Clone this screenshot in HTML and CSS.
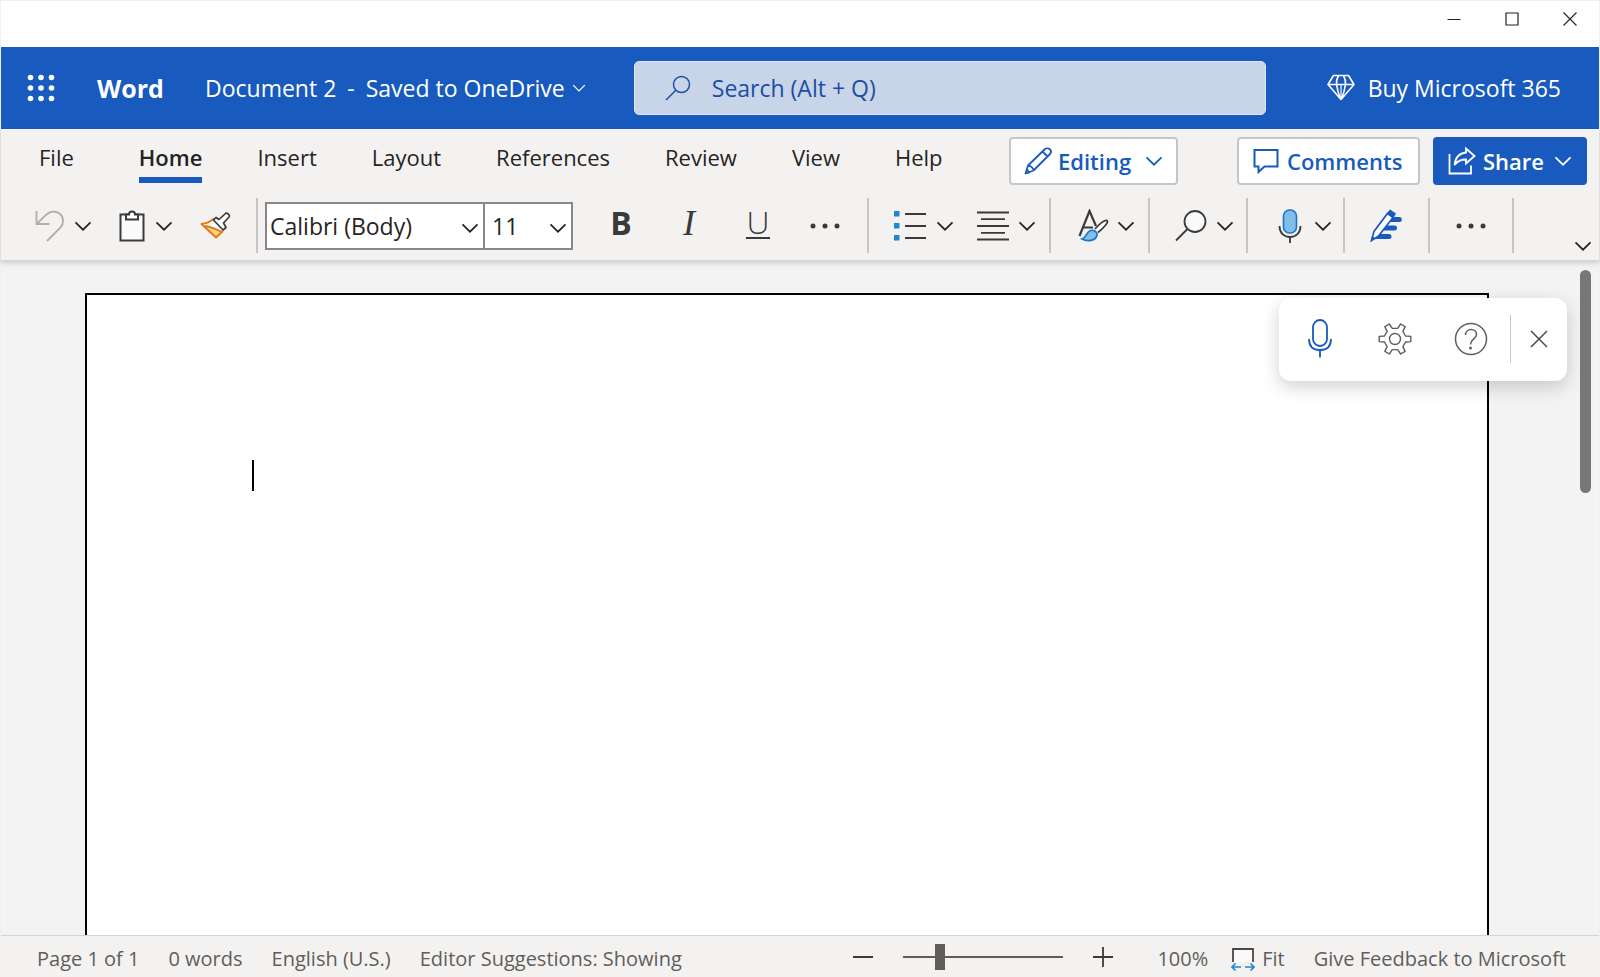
FILE: index.html
```html
<!DOCTYPE html>
<html lang="en">
<head>
<meta charset="utf-8">
<title>Document 2 - Word</title>
<link rel="stylesheet" href="styles.css">
</head>
<body>
<svg class="defs" aria-hidden="true">
  <symbol id="chevron" viewBox="0 0 18 12"><path d="M1.500 2.300 9 9.700 16.500 2.300" fill="none" stroke="currentColor" stroke-width="1.700"/></symbol>
  <symbol id="dots" viewBox="0 0 30 6"><g fill="currentColor"><circle cx="3" cy="3" r="2.500"/><circle cx="15" cy="3" r="2.500"/><circle cx="27" cy="3" r="2.500"/></g></symbol>
</svg>
<div class="window">
  <div class="titlebar">
    <button class="plain" aria-label="Minimize"><svg width="14" height="14" viewBox="0 0 14 14"><path d="M.5 7.500H13.500" stroke="#222" fill="none"/></svg></button>
    <button class="plain" aria-label="Maximize"><svg width="14" height="14" viewBox="0 0 14 14"><path d="M1 1H13V13H1Z" stroke="#222" stroke-width="1.200" fill="none"/></svg></button>
    <button class="plain" aria-label="Close"><svg width="14" height="14" viewBox="0 0 14 14"><path d="M.5.5 13.500 13.500M13.500.5.5 13.500" stroke="#222" stroke-width="1.100" fill="none"/></svg></button>
  </div>

  <header class="header">
    <button class="plain launcher" aria-label="App launcher"><svg width="28" height="28" viewBox="0 0 28 28" fill="#fff"><circle cx="3.500" cy="3.500" r="2.800"/><circle cx="14" cy="3.500" r="2.800"/><circle cx="24.500" cy="3.500" r="2.800"/><circle cx="3.500" cy="14" r="2.800"/><circle cx="14" cy="14" r="2.800"/><circle cx="24.500" cy="14" r="2.800"/><circle cx="3.500" cy="24.500" r="2.800"/><circle cx="14" cy="24.500" r="2.800"/><circle cx="24.500" cy="24.500" r="2.800"/></svg></button>
    <span class="app-name">Word</span>
    <button class="plain doc-name"><span>Document 2</span><span>-</span><span>Saved to OneDrive</span><svg width="14" height="10"><use href="#chevron"/></svg></button>
    <label class="search">
      <svg width="26" height="26" viewBox="0 0 26 26" fill="none" stroke="#1a4fa3" stroke-width="1.500"><circle cx="16.500" cy="9.500" r="8"/><path d="M10.800 15.200 1 25"/></svg>
      <input type="search" placeholder="Search (Alt + Q)" aria-label="Search">
    </label>
    <button class="plain buy"><svg width="28" height="28" viewBox="0 0 28 28" fill="none" stroke="#fff" stroke-width="1.600" stroke-linejoin="round"><path d="M6.500 1.500H21.500L27 10.500 14 25.500 1 10.500ZM1 10.500H27M11.500 1.500Q9 6 9.500 10.500 10.500 18 14 25.500 17.500 18 18.500 10.500 19 6 16.500 1.500"/><path d="M14 10.500V25" stroke-width="1.200"/></svg><span>Buy Microsoft 365</span></button>
  </header>

  <div class="ribbon">
    <div class="tab-row">
      <nav class="tabs">
        <button class="plain tab file">File</button>
        <button class="plain tab active">Home</button>
        <button class="plain tab">Insert</button>
        <button class="plain tab">Layout</button>
        <button class="plain tab">References</button>
        <button class="plain tab">Review</button>
        <button class="plain tab">View</button>
        <button class="plain tab">Help</button>
      </nav>
      <button class="action editing"><svg width="28" height="28" viewBox="0 0 28 28" fill="none" stroke="#185abd" stroke-width="1.800" stroke-linejoin="round"><path d="M1.500 26.500 4 18.500 20.500 2.500C22 1 24.500 1 26 2.500S27 6 25.500 7.500L9.500 23.500ZM4 18.500C6.500 18.500 9.500 21 9.500 23.500M18.500 4.500 23.500 9.500M1.500 26.500 3 22.500 5.500 25.500Z"/></svg><span>Editing</span><svg width="18" height="12"><use href="#chevron"/></svg></button>
      <button class="action comments"><svg width="26" height="26" viewBox="0 0 26 26" fill="none" stroke="#185abd" stroke-width="2"><path d="M1.500 2H24.500V18.500H11.500L5.500 24V18.500H1.500Z"/></svg><span>Comments</span></button>
      <button class="action share"><svg width="28" height="28" viewBox="0 0 28 28" fill="none" stroke="#fff" stroke-width="1.800"><path d="M1.500 7V26.500H23V18.500"/><path d="M18 1.500 26.500 9 18 16.500V12.500C12 12.500 9 14.500 6.500 18 7.500 10.500 11.500 6 18 5.500Z"/></svg><span>Share</span><svg width="18" height="12"><use href="#chevron"/></svg></button>
    </div>

    <div class="toolbar">
      <div class="group first">
        <button class="plain" aria-label="Undo"><svg width="29" height="32" viewBox="0 0 29 32" fill="none" stroke="#b0aeac" stroke-width="1.800"><path d="M1.500 1V14H14.500M1.500 14 11 4.800C15 1 20.500.5 24.500 3.500 29 7 29 13.500 25.500 17.500L12 31"/></svg></button>
        <button class="plain more" aria-label="Undo options"><svg width="18" height="12"><use href="#chevron"/></svg></button>
        <button class="plain paste" aria-label="Paste"><svg width="26" height="32" viewBox="0 0 26 32" fill="#fff" stroke="#3b3a39" stroke-width="2"><path d="M1.500 4.500H24.500V30.500H1.500Z" fill="#fafafa"/><path d="M7 4.500H10C10 2.500 11.300 1.500 13 1.500S16 2.500 16 4.500H19V9.500H7Z"/></svg></button>
        <button class="plain more" aria-label="Paste options"><svg width="18" height="12"><use href="#chevron"/></svg></button>
        <button class="plain painter" aria-label="Format painter"><svg width="31" height="28" viewBox="0 0 31 28" stroke-linejoin="round"><path d="M1.500 12 14 6.500 24 18 16 25.500Z" fill="#fff"/><path d="M5 14 22.500 20 16 25.500Z" fill="#fbd38b"/><path d="M14 6.500C10 10 6.500 11.500 1.500 12L16 25.500 23 19M5 14C11 15 16 17 22 20" fill="none" stroke="#e8740c" stroke-width="1.800"/><path d="M13.500 8 16 5.500 19 7.500 25.500 1.500C27 .5 30.500 3 29 5L23.500 11 26 15.500 23 18Z" fill="#fff" stroke="#3b3a39" stroke-width="1.700"/></svg></button>
      </div>
      <div class="group fonts">
        <span class="combo family"><select aria-label="Font"><option>Calibri (Body)</option></select><svg width="18" height="12"><use href="#chevron"/></svg></span>
        <span class="combo size"><select aria-label="Font size"><option>11</option></select><svg width="18" height="12"><use href="#chevron"/></svg></span>
        <button class="plain letter bold" aria-label="Bold">B</button>
        <button class="plain letter italic" aria-label="Italic">I</button>
        <button class="plain letter under" aria-label="Underline"><span>U</span></button>
        <button class="plain overflow" aria-label="More font options"><svg width="30" height="6"><use href="#dots"/></svg></button>
      </div>
      <div class="group para">
        <button class="plain" aria-label="Bullets"><svg width="32" height="30" viewBox="0 0 32 30"><path d="M0 0H5.500V5.500H0ZM0 12H5.500V17.500H0ZM0 24H5.500V29.500H0Z" fill="#1e88d2"/><path d="M11 3H32M11 15H32M11 27H32" stroke="#3b3a39" stroke-width="1.800"/></svg></button>
        <button class="plain more" aria-label="Bullet options"><svg width="18" height="12"><use href="#chevron"/></svg></button>
        <button class="plain align" aria-label="Alignment"><svg width="32" height="30" viewBox="0 0 32 30" stroke="#3b3a39" stroke-width="1.800"><path d="M0 1.500H32M4 8.200H28M0 15H32M4 21.800H28M0 28.500H32"/></svg></button>
        <button class="plain more near" aria-label="Alignment options"><svg width="18" height="12"><use href="#chevron"/></svg></button>
      </div>
      <div class="group wide">
        <button class="plain low" aria-label="Styles"><svg width="32" height="33" viewBox="0 0 32 33" fill="none"><path d="M1.500 27 11.500 2 18 17M5.500 18.500H15" stroke="#3b3a39" stroke-width="2.200"/><path d="M17 20C22 14.500 26 11 29 11.500 31 12.500 27 18 20 23.500" stroke="#3b3a39" stroke-width="1.700" fill="#fff"/><path d="M4 30C8 29 8 23.500 12.500 21.500 16 20.500 19.500 23 19 26 18 32 9 33 4 30Z" fill="#83bdea" stroke="#1876c9" stroke-width="1.700"/></svg></button>
        <button class="plain more tight" aria-label="Style options"><svg width="18" height="12"><use href="#chevron"/></svg></button>
      </div>
      <div class="group find">
        <button class="plain" aria-label="Find"><svg width="32" height="32" viewBox="0 0 32 32" stroke="#3b3a39" stroke-width="1.800"><circle cx="20" cy="11.500" r="10.500" fill="#fafafa"/><path d="M12.500 19 1 30.500"/></svg></button>
        <button class="plain more near" aria-label="Find options"><svg width="18" height="12"><use href="#chevron"/></svg></button>
      </div>
      <div class="group dictate">
        <button class="plain" aria-label="Dictate"><svg width="24" height="34" viewBox="0 0 24 34" fill="none"><rect x="5.500" y="1" width="13" height="23" rx="6" fill="#83bdea" stroke="#1876c9" stroke-width="1.600"/><path d="M1.500 17C1.500 24 6 28 12 28S22.500 24 22.500 17M12 28V34" stroke="#3b3a39" stroke-width="1.800"/></svg></button>
        <button class="plain more loose" aria-label="Dictate options"><svg width="18" height="12"><use href="#chevron"/></svg></button>
      </div>
      <div class="group editor">
        <button class="plain" aria-label="Editor"><svg width="33" height="33" viewBox="0 0 33 33"><path d="M18 10.500H29.300M13 19H24.500M7 27.500H19" stroke="#185abd" stroke-width="5" stroke-linecap="round"/><path d="M1.500 31.500 4 22.500 17.500 4.500 23 8.500 8.500 27Z" fill="#fff" stroke="#185abd" stroke-width="1.700"/><path d="M17 4 20 .5 26 4.500 23.500 9ZM.8 32.500 2 27 5.500 29.500Z" fill="#185abd"/></svg></button>
      </div>
      <div class="group extra">
        <button class="plain" aria-label="More commands"><svg width="30" height="6"><use href="#dots"/></svg></button>
      </div>
      <button class="plain collapse" aria-label="Ribbon display options"><svg width="18" height="12"><use href="#chevron"/></svg></button>
    </div>
  </div>

  <main class="canvas">
    <article class="page"><div class="caret"></div></article>
    <div class="scrollbar"><div class="thumb"></div></div>
    <div class="dictation">
      <button class="plain" aria-label="Start dictation"><svg width="24" height="39" viewBox="0 0 24 39" fill="none" stroke="#185abd" stroke-width="1.800"><rect x="5" y="1" width="14" height="26" rx="7"/><path d="M1 20C1 27 5 31 12 31S23 27 23 20M12 31V38.500"/></svg></button>
      <button class="plain settings" aria-label="Settings"><svg width="34" height="34" viewBox="-17 -17 34 34" fill="none" stroke="#605e5c" stroke-width="1.400" stroke-linejoin="round"><path d="M10.500-3 15.800-2.600V2.600L10.500 3 7.900 7.600 10.150 12.400 5.650 15 2.700 10.600H-2.700L-5.650 15-10.150 12.400-7.900 7.600-10.500 3-15.800 2.600V-2.600L-10.500-3-7.900-7.600-10.150-12.400-5.650-15-2.700-10.600H2.700L5.650-15 10.150-12.400 7.900-7.600Z"/><circle r="5.500"/></svg></button>
      <button class="plain help" aria-label="Help"><svg width="34" height="34" viewBox="0 0 34 34" fill="none" stroke="#605e5c" stroke-width="1.500"><circle cx="17" cy="17" r="15.500"/><path d="M11.500 13C11.500 9.500 14 7.500 17 7.500S22.500 9.500 22.500 12.500C22.500 17 16.500 17 16.500 22.500"/><circle cx="16.500" cy="26" r="1.500" fill="#605e5c" stroke="none"/></svg></button>
      <span class="rule"></span>
      <button class="plain" aria-label="Close dictation"><svg width="18" height="18" viewBox="0 0 18 18"><path d="M1 1 17 17M17 1 1 17" stroke="#4a4846" stroke-width="1.500" fill="none"/></svg></button>
    </div>
  </main>

  <footer class="status">
    <span>Page 1 of 1</span>
    <span>0 words</span>
    <span>English (U.S.)</span>
    <span>Editor Suggestions: Showing</span>
    <div class="zoom">
      <button class="plain" aria-label="Zoom out"><svg width="20" height="20" viewBox="0 0 20 20"><path d="M0 10H20" stroke="#3b3a39" stroke-width="2"/></svg></button>
      <input type="range" min="0" max="100" value="21" aria-label="Zoom">
      <button class="plain" aria-label="Zoom in"><svg width="20" height="20" viewBox="0 0 20 20"><path d="M0 10H20M10 0V20" stroke="#3b3a39" stroke-width="1.800"/></svg></button>
    </div>
    <span class="percent">100%</span>
    <button class="plain fit"><svg width="24" height="24" viewBox="0 0 24 24" fill="none"><path d="M2 15V2H22V15" fill="#fafafa" stroke="#4a4846" stroke-width="1.800"/><path d="M10 20H1M4.500 16.500 1 20 4.500 23.500M14 20H23M19.500 16.500 23 20 19.500 23.500" stroke="#1e88d2" stroke-width="1.600"/></svg><span>Fit</span></button>
    <button class="plain">Give Feedback to Microsoft</button>
  </footer>
</div>
</body>
</html>
```
FILE: styles.css
```css
* { box-sizing: border-box; }
body {
  margin: 0;
  background: #f0f0f0;
  color: #252423;
  font-family: "Segoe UI", "Open Sans", "Noto Sans", sans-serif;
  font-size: 22px;
  line-height: 32px;
}
svg { display: block; flex: none; }
.defs { position: absolute; width: 0; height: 0; }
button, input, select { font: inherit; color: inherit; }
.plain {
  display: flex;
  align-items: center;
  padding: 0;
  border: 0;
  background: none;
  white-space: nowrap;
}
.window {
  display: flex;
  flex-direction: column;
  height: 100vh;
  padding: 1px 1px 0;
}
.titlebar {
  display: flex;
  justify-content: flex-end;
  gap: 44px;
  height: 46px;
  padding: 11px 22px 0 0;
  background: #fff;
}
.titlebar .plain { height: 14px; }

/* Blue header */
.header {
  display: flex;
  align-items: center;
  height: 82px;
  padding: 0 38px 0 26px;
  background: #185abd;
  color: #fff;
  font-size: 23px;
}
.app-name { margin-left: 42px; width: 69px; font-weight: 700; font-size: 25px; }
.doc-name { margin-left: 39px; gap: 11px; }
.doc-name svg { margin-left: -4px; }
.search {
  display: flex;
  align-items: center;
  gap: 21px;
  width: 632px;
  height: 54px;
  margin: 0 auto 0 48px;
  padding: 0 30px;
  border: 1px solid #dbe5f3;
  border-radius: 5px;
  background: #c8d4e8;
  color: #1a4fa3;
}
.search input { flex: 1; min-width: 0; padding: 0; border: 0; outline: 0; background: none; }
.search input::placeholder { color: #1a4fa3; opacity: 1; }
.buy { gap: 13px; }

/* Ribbon */
.ribbon {
  position: relative;
  z-index: 1;
  border-bottom: 1px solid #d6d4d2;
  background: #f3f2f1;
  box-shadow: 0 2px 5px rgba(0, 0, 0, .16);
}
.tab-row { display: flex; align-items: flex-start; height: 64px; padding: 8px 12px 0 38px; }
.tabs { display: flex; gap: 55px; margin-right: auto; padding-top: 4px; }
.tab { height: 42px; align-items: flex-start; }
.file { margin-right: 10px; }
.active { border-bottom: 6px solid #185abd; font-weight: 600; }
.action {
  display: flex;
  align-items: center;
  height: 48px;
  padding: 0 13px;
  border: 2px solid #c8c6c4;
  border-radius: 4px;
  background: #fff;
  color: #185abd;
  font-weight: 600;
  white-space: nowrap;
}
.editing { width: 169px; margin-right: 59px; }
.editing span { margin: 0 auto 0 6px; }
.comments { width: 183px; margin-right: 13px; padding: 0 14px; gap: 8px; }
.share { width: 154px; border-color: #185abd; background: #185abd; color: #fff; }
.share span { margin: 0 auto 0 7px; }

.toolbar { display: flex; align-items: center; height: 67px; padding: 0 7px 2px 34px; }
.group { display: flex; align-items: center; height: 55px; border-right: 2px solid #c8c6c4; }
.more { margin-left: 10px; }
.near { margin-left: 9px; }
.tight { margin-left: 7px; }
.loose { margin-left: 12px; }
.paste { margin-left: 27px; }
.painter { margin-left: 27px; }
.first { padding-right: 25px; }
.fonts { padding: 0 27px 0 7px; }
.combo { position: relative; height: 48px; border: 2px solid #8a8886; background: #fff; font-size: 23px; }
.combo select {
  width: 100%;
  height: 100%;
  padding: 0 30px 0 3px;
  border: 0;
  appearance: none;
  background: none;
}
.combo svg { position: absolute; right: 4px; top: 18px; pointer-events: none; }
.family { width: 220px; }
.size { width: 90px; margin-left: -2px; }
.size select { padding-left: 7px; }
.letter { justify-content: center; width: 36px; height: 40px; padding-bottom: 5px; color: #3b3a39; font-size: 32px; }
.bold { margin-left: 30px; font-weight: 700; }
.italic { margin-left: 32px; font-family: "Liberation Serif", serif; font-size: 36px; font-style: italic; }
.under { margin-left: 33px; font-weight: 300; }
.under span { border-bottom: 2px solid #3b3a39; line-height: 30px; }
.overflow { margin-left: 34px; color: #3b3a39; }
.para { padding: 0 13px 0 25px; }
.align { margin-left: 23px; }
.wide { padding: 0 13px 0 27px; }
.find { padding: 0 12px 0 25px; }
.dictate { padding: 0 11px 0 30px; }
.editor { padding: 0 25px; }
.extra { padding: 0 26px; color: #3b3a39; }
.collapse { align-self: flex-end; margin: 0 0 6px auto; }

/* Document area */
.canvas {
  position: relative;
  display: flex;
  flex: 1;
  min-height: 0;
  background: #f3f3f3;
}
.page {
  flex: 1;
  margin: 32px 91px 0 84px;
  padding: 165px 165px 0;
  border: 2px solid #000;
  border-bottom: 0;
  background: #fff;
}
.caret { width: 2px; height: 31px; background: #000; }
.scrollbar { width: 19px; padding: 9px 8px 0 0; }
.thumb { width: 11px; height: 223px; border-radius: 6px; background: #797775; }
.dictation {
  position: absolute;
  top: 37px;
  right: 32px;
  display: flex;
  align-items: center;
  height: 83px;
  padding: 0 19px 2px 29px;
  border-radius: 12px;
  background: #fff;
  box-shadow: 0 6px 18px rgba(0, 0, 0, .18);
}
.settings { margin-left: 46px; }
.help { margin-left: 42px; }
.rule { width: 1px; height: 48px; margin: 0 19px 0 22px; background: #c8c6c4; }

/* Status bar */
.status {
  display: flex;
  align-items: center;
  gap: 29px;
  height: 42px;
  padding: 4px 33px 0 36px;
  border-top: 1px solid #d6d4d2;
  background: #f3f2f1;
  color: #605e5c;
  font-size: 20px;
  line-height: 28px;
  white-space: nowrap;
}
.zoom { display: flex; align-items: center; gap: 30px; margin-left: auto; padding-bottom: 4px; }
.zoom input { width: 160px; height: 26px; margin: 0; appearance: none; background: linear-gradient(#605e5c, #605e5c) center / 100% 2px no-repeat; }
.zoom input::-webkit-slider-thumb { width: 10px; height: 26px; appearance: none; background: #605e5c; }
.percent { margin-left: 15px; }
.fit { gap: 7px; margin-left: -6px; }
```
